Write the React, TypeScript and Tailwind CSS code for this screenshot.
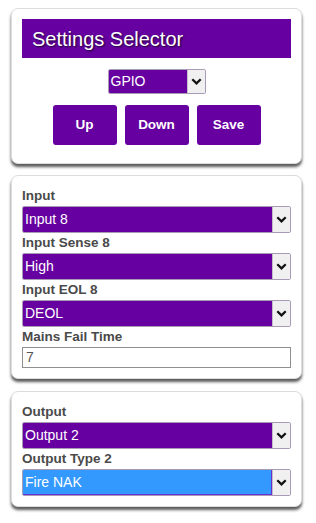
import React from "react";

const font = { fontFamily: '"Liberation Sans", Arial, sans-serif' };

function Chevron() {
  return (
    <svg width="11" height="7" viewBox="0 0 11 7" aria-hidden>
      <path d="M1.3 1.3 L5.5 5.4 L9.7 1.3" fill="none" stroke="#111" strokeWidth="2.3" />
    </svg>
  );
}

function FakeSelect({
  value,
  className = "",
  blue = false,
}: {
  value: string;
  className?: string;
  blue?: boolean;
}) {
  return (
    <div
      className={
        "flex rounded-[2px] border border-[#a99bb5] overflow-hidden " + className
      }
    >
      <div
        className={
          "flex-1 flex items-center pl-[2px] text-[14px] text-white " +
          (blue ? "bg-[#3399ff] border-r border-b border-[#6a2fd0]" : "bg-[#6600a0]")
        }
      >
        {value}
      </div>
      <div className="w-[18px] flex items-center justify-center bg-[#f0f0f0] border-l border-[#c4bccb]">
        <Chevron />
      </div>
    </div>
  );
}

function Card({ children, className = "" }: { children: React.ReactNode; className?: string }) {
  return (
    <div
      className={
        "mx-[11px] w-[291px] rounded-[7px] border border-[#dcdcdc] bg-white p-[10px] shadow-[0_3px_3px_#5a5a5a] " +
        className
      }
    >
      {children}
    </div>
  );
}

function Label({ children }: { children: React.ReactNode }) {
  return (
    <div className="h-[20px] flex items-center text-[13.5px] font-bold text-[#4a4a4a]">
      {children}
    </div>
  );
}

export default function App() {
  return (
    <div className="min-h-screen bg-white pt-[8px] flex flex-col gap-[11px]" style={font}>
      {/* Settings selector */}
      <Card className="pb-[18px]">
        <div className="h-[39px] flex items-center bg-[#6600a0] px-[10px] text-[20px] text-white [text-shadow:1px_1px_2px_#1a0030]">
          Settings Selector
        </div>
        <div className="mt-[11px] flex justify-center">
          <FakeSelect value="GPIO" className="w-[98px] h-[25px]" />
        </div>
        <div className="mt-[11px] flex justify-center gap-[8px]">
          {["Up", "Down", "Save"].map((b) => (
            <button
              key={b}
              className="w-[64px] h-[40px] rounded-[3px] bg-[#6600a0] text-[13.5px] font-bold text-white"
            >
              {b}
            </button>
          ))}
        </div>
      </Card>

      {/* Inputs */}
      <Card>
        <Label>Input</Label>
        <FakeSelect value="Input 8" className="h-[27px]" />
        <Label>Input Sense 8</Label>
        <FakeSelect value="High" className="h-[27px]" />
        <Label>Input EOL 8</Label>
        <FakeSelect value="DEOL" className="h-[27px]" />
        <Label>Mains Fail Time</Label>
        <div className="h-[21px] flex items-center border border-[#8f8f8f] pl-[3px] text-[14px] text-[#555]">
          7
        </div>
      </Card>

      {/* Outputs */}
      <Card className="mt-[1px]">
        <Label>Output</Label>
        <FakeSelect value="Output 2" className="h-[27px]" />
        <Label>Output Type 2</Label>
        <FakeSelect value="Fire NAK" className="h-[27px]" blue />
      </Card>
    </div>
  );
}
